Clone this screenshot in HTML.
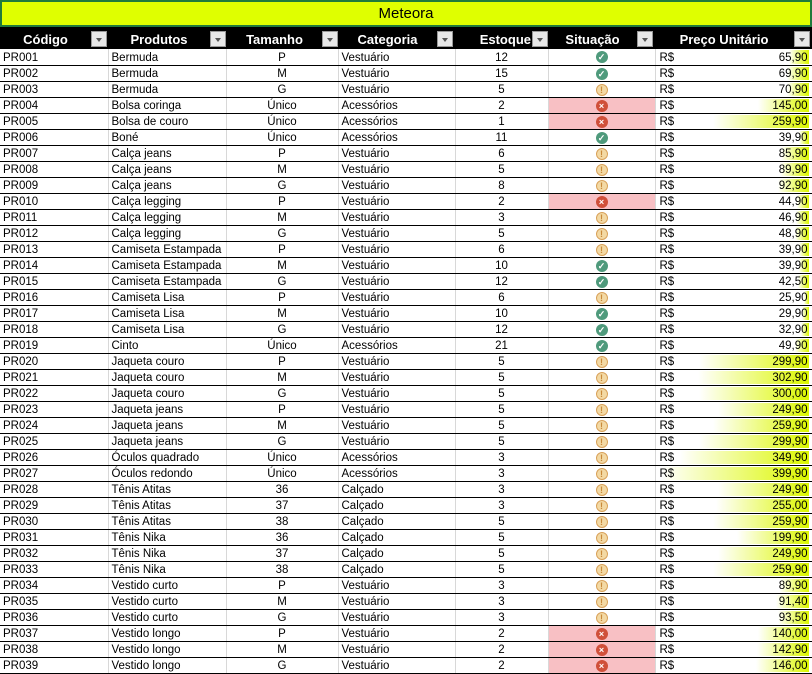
<!DOCTYPE html><html><head><meta charset="utf-8"><style>
*{margin:0;padding:0;box-sizing:border-box}
body{width:812px;height:672px;overflow:hidden;background:#fff;font-family:"Liberation Sans",Arial,sans-serif;font-size:11.5px;color:#000}
.title{position:absolute;left:0;top:0;width:812px;height:27px;background:#dfff00;border:2px solid #1f7a3c;text-align:center;font-size:15px;line-height:24px}
.hdr{position:absolute;left:0;top:27px;width:812px;height:22px;background:#000}
.hdr div{position:absolute;top:0;height:22px;color:#fff;font-weight:bold;font-size:13px;line-height:26px;text-align:center}
.dd{position:absolute;top:4px;width:16px;height:16px;background:#e8e8e8;border:1px solid #999}
.dd:after{content:"";position:absolute;left:4px;top:6px;border-left:3.5px solid transparent;border-right:3.5px solid transparent;border-top:4px solid #555}
table{position:absolute;left:0;top:49px;border-collapse:collapse;table-layout:fixed;width:812px}
td{height:16px;border-bottom:1px solid #000;border-right:1px solid #d8d8d8;padding:0 3px;line-height:14px;vertical-align:bottom;white-space:nowrap;overflow:hidden;position:relative}
td.c{text-align:center}
td.r{background:#f8c0c4}
td.p{padding:0 4px 0 4px}
.bar{position:absolute;right:3px;top:1px;bottom:1px;background:linear-gradient(to right,#fff,#dcf700)}
.v{position:relative;float:right}
.rs{position:relative}
.i{position:absolute;left:50%;top:2px;margin-left:-6px;width:12px;height:12px;border-radius:50%;color:#fff;font-size:9px;line-height:12px;text-align:center;font-weight:bold}
.g{background:#4f9a7c}
.a{background:#f3d9a4;border:1px solid #d9a25a;color:#c98a3a;line-height:10px}
.x{background:#d0503a}
</style></head><body>
<div class="title">Meteora</div>
<div class="hdr">
<div style="left:0;width:91px">Código</div><span class="dd" style="left:91px"></span>
<div style="left:108px;width:102px">Produtos</div><span class="dd" style="left:210px"></span>
<div style="left:226px;width:97px">Tamanho</div><span class="dd" style="left:322px"></span>
<div style="left:338px;width:99px">Categoria</div><span class="dd" style="left:437px"></span>
<div style="left:455px;width:76px;text-align:right">Estoque</div><span class="dd" style="left:532px"></span>
<div style="left:548px;width:89px">Situação</div><span class="dd" style="left:637px"></span>
<div style="left:655px;width:138px">Preço Unitário</div><span class="dd" style="left:794px"></span>
</div>
<table>
<colgroup><col style="width:108px"><col style="width:118px"><col style="width:112px"><col style="width:117px"><col style="width:93px"><col style="width:107px"><col style="width:157px"></colgroup>
<tr><td>PR001</td><td>Bermuda</td><td class="c">P</td><td>Vestuário</td><td class="c">12</td><td class="c"><span class="i g">✓</span></td><td class="p"><div class="bar" style="width:20px"></div><span class="rs">R$</span><span class="v">65,90</span></td></tr>
<tr><td>PR002</td><td>Bermuda</td><td class="c">M</td><td>Vestuário</td><td class="c">15</td><td class="c"><span class="i g">✓</span></td><td class="p"><div class="bar" style="width:22px"></div><span class="rs">R$</span><span class="v">69,90</span></td></tr>
<tr><td>PR003</td><td>Bermuda</td><td class="c">G</td><td>Vestuário</td><td class="c">5</td><td class="c"><span class="i a">!</span></td><td class="p"><div class="bar" style="width:22px"></div><span class="rs">R$</span><span class="v">70,90</span></td></tr>
<tr><td>PR004</td><td>Bolsa coringa</td><td class="c">Único</td><td>Acessórios</td><td class="c">2</td><td class="c r"><span class="i x">×</span></td><td class="p"><div class="bar" style="width:51px"></div><span class="rs">R$</span><span class="v">145,00</span></td></tr>
<tr><td>PR005</td><td>Bolsa de couro</td><td class="c">Único</td><td>Acessórios</td><td class="c">1</td><td class="c r"><span class="i x">×</span></td><td class="p"><div class="bar" style="width:96px"></div><span class="rs">R$</span><span class="v">259,90</span></td></tr>
<tr><td>PR006</td><td>Boné</td><td class="c">Único</td><td>Acessórios</td><td class="c">11</td><td class="c"><span class="i g">✓</span></td><td class="p"><div class="bar" style="width:10px"></div><span class="rs">R$</span><span class="v">39,90</span></td></tr>
<tr><td>PR007</td><td>Calça jeans</td><td class="c">P</td><td>Vestuário</td><td class="c">6</td><td class="c"><span class="i a">!</span></td><td class="p"><div class="bar" style="width:28px"></div><span class="rs">R$</span><span class="v">85,90</span></td></tr>
<tr><td>PR008</td><td>Calça jeans</td><td class="c">M</td><td>Vestuário</td><td class="c">5</td><td class="c"><span class="i a">!</span></td><td class="p"><div class="bar" style="width:29px"></div><span class="rs">R$</span><span class="v">89,90</span></td></tr>
<tr><td>PR009</td><td>Calça jeans</td><td class="c">G</td><td>Vestuário</td><td class="c">8</td><td class="c"><span class="i a">!</span></td><td class="p"><div class="bar" style="width:31px"></div><span class="rs">R$</span><span class="v">92,90</span></td></tr>
<tr><td>PR010</td><td>Calça legging</td><td class="c">P</td><td>Vestuário</td><td class="c">2</td><td class="c r"><span class="i x">×</span></td><td class="p"><div class="bar" style="width:12px"></div><span class="rs">R$</span><span class="v">44,90</span></td></tr>
<tr><td>PR011</td><td>Calça legging</td><td class="c">M</td><td>Vestuário</td><td class="c">3</td><td class="c"><span class="i a">!</span></td><td class="p"><div class="bar" style="width:13px"></div><span class="rs">R$</span><span class="v">46,90</span></td></tr>
<tr><td>PR012</td><td>Calça legging</td><td class="c">G</td><td>Vestuário</td><td class="c">5</td><td class="c"><span class="i a">!</span></td><td class="p"><div class="bar" style="width:14px"></div><span class="rs">R$</span><span class="v">48,90</span></td></tr>
<tr><td>PR013</td><td>Camiseta Estampada</td><td class="c">P</td><td>Vestuário</td><td class="c">6</td><td class="c"><span class="i a">!</span></td><td class="p"><div class="bar" style="width:10px"></div><span class="rs">R$</span><span class="v">39,90</span></td></tr>
<tr><td>PR014</td><td>Camiseta Estampada</td><td class="c">M</td><td>Vestuário</td><td class="c">10</td><td class="c"><span class="i g">✓</span></td><td class="p"><div class="bar" style="width:10px"></div><span class="rs">R$</span><span class="v">39,90</span></td></tr>
<tr><td>PR015</td><td>Camiseta Estampada</td><td class="c">G</td><td>Vestuário</td><td class="c">12</td><td class="c"><span class="i g">✓</span></td><td class="p"><div class="bar" style="width:11px"></div><span class="rs">R$</span><span class="v">42,50</span></td></tr>
<tr><td>PR016</td><td>Camiseta Lisa</td><td class="c">P</td><td>Vestuário</td><td class="c">6</td><td class="c"><span class="i a">!</span></td><td class="p"><div class="bar" style="width:5px"></div><span class="rs">R$</span><span class="v">25,90</span></td></tr>
<tr><td>PR017</td><td>Camiseta Lisa</td><td class="c">M</td><td>Vestuário</td><td class="c">10</td><td class="c"><span class="i g">✓</span></td><td class="p"><div class="bar" style="width:7px"></div><span class="rs">R$</span><span class="v">29,90</span></td></tr>
<tr><td>PR018</td><td>Camiseta Lisa</td><td class="c">G</td><td>Vestuário</td><td class="c">12</td><td class="c"><span class="i g">✓</span></td><td class="p"><div class="bar" style="width:8px"></div><span class="rs">R$</span><span class="v">32,90</span></td></tr>
<tr><td>PR019</td><td>Cinto</td><td class="c">Único</td><td>Acessórios</td><td class="c">21</td><td class="c"><span class="i g">✓</span></td><td class="p"><div class="bar" style="width:14px"></div><span class="rs">R$</span><span class="v">49,90</span></td></tr>
<tr><td>PR020</td><td>Jaqueta couro</td><td class="c">P</td><td>Vestuário</td><td class="c">5</td><td class="c"><span class="i a">!</span></td><td class="p"><div class="bar" style="width:110px"></div><span class="rs">R$</span><span class="v">299,90</span></td></tr>
<tr><td>PR021</td><td>Jaqueta couro</td><td class="c">M</td><td>Vestuário</td><td class="c">5</td><td class="c"><span class="i a">!</span></td><td class="p"><div class="bar" style="width:111px"></div><span class="rs">R$</span><span class="v">302,90</span></td></tr>
<tr><td>PR022</td><td>Jaqueta couro</td><td class="c">G</td><td>Vestuário</td><td class="c">5</td><td class="c"><span class="i a">!</span></td><td class="p"><div class="bar" style="width:110px"></div><span class="rs">R$</span><span class="v">300,00</span></td></tr>
<tr><td>PR023</td><td>Jaqueta jeans</td><td class="c">P</td><td>Vestuário</td><td class="c">5</td><td class="c"><span class="i a">!</span></td><td class="p"><div class="bar" style="width:91px"></div><span class="rs">R$</span><span class="v">249,90</span></td></tr>
<tr><td>PR024</td><td>Jaqueta jeans</td><td class="c">M</td><td>Vestuário</td><td class="c">5</td><td class="c"><span class="i a">!</span></td><td class="p"><div class="bar" style="width:96px"></div><span class="rs">R$</span><span class="v">259,90</span></td></tr>
<tr><td>PR025</td><td>Jaqueta jeans</td><td class="c">G</td><td>Vestuário</td><td class="c">5</td><td class="c"><span class="i a">!</span></td><td class="p"><div class="bar" style="width:110px"></div><span class="rs">R$</span><span class="v">299,90</span></td></tr>
<tr><td>PR026</td><td>Óculos quadrado</td><td class="c">Único</td><td>Acessórios</td><td class="c">3</td><td class="c"><span class="i a">!</span></td><td class="p"><div class="bar" style="width:129px"></div><span class="rs">R$</span><span class="v">349,90</span></td></tr>
<tr><td>PR027</td><td>Óculos redondo</td><td class="c">Único</td><td>Acessórios</td><td class="c">3</td><td class="c"><span class="i a">!</span></td><td class="p"><div class="bar" style="width:148px"></div><span class="rs">R$</span><span class="v">399,90</span></td></tr>
<tr><td>PR028</td><td>Tênis Atitas</td><td class="c">36</td><td>Calçado</td><td class="c">3</td><td class="c"><span class="i a">!</span></td><td class="p"><div class="bar" style="width:91px"></div><span class="rs">R$</span><span class="v">249,90</span></td></tr>
<tr><td>PR029</td><td>Tênis Atitas</td><td class="c">37</td><td>Calçado</td><td class="c">3</td><td class="c"><span class="i a">!</span></td><td class="p"><div class="bar" style="width:93px"></div><span class="rs">R$</span><span class="v">255,00</span></td></tr>
<tr><td>PR030</td><td>Tênis Atitas</td><td class="c">38</td><td>Calçado</td><td class="c">5</td><td class="c"><span class="i a">!</span></td><td class="p"><div class="bar" style="width:96px"></div><span class="rs">R$</span><span class="v">259,90</span></td></tr>
<tr><td>PR031</td><td>Tênis Nika</td><td class="c">36</td><td>Calçado</td><td class="c">5</td><td class="c"><span class="i a">!</span></td><td class="p"><div class="bar" style="width:72px"></div><span class="rs">R$</span><span class="v">199,90</span></td></tr>
<tr><td>PR032</td><td>Tênis Nika</td><td class="c">37</td><td>Calçado</td><td class="c">5</td><td class="c"><span class="i a">!</span></td><td class="p"><div class="bar" style="width:91px"></div><span class="rs">R$</span><span class="v">249,90</span></td></tr>
<tr><td>PR033</td><td>Tênis Nika</td><td class="c">38</td><td>Calçado</td><td class="c">5</td><td class="c"><span class="i a">!</span></td><td class="p"><div class="bar" style="width:96px"></div><span class="rs">R$</span><span class="v">259,90</span></td></tr>
<tr><td>PR034</td><td>Vestido curto</td><td class="c">P</td><td>Vestuário</td><td class="c">3</td><td class="c"><span class="i a">!</span></td><td class="p"><div class="bar" style="width:29px"></div><span class="rs">R$</span><span class="v">89,90</span></td></tr>
<tr><td>PR035</td><td>Vestido curto</td><td class="c">M</td><td>Vestuário</td><td class="c">3</td><td class="c"><span class="i a">!</span></td><td class="p"><div class="bar" style="width:33px"></div><span class="rs">R$</span><span class="v">91,40</span></td></tr>
<tr><td>PR036</td><td>Vestido curto</td><td class="c">G</td><td>Vestuário</td><td class="c">3</td><td class="c"><span class="i a">!</span></td><td class="p"><div class="bar" style="width:31px"></div><span class="rs">R$</span><span class="v">93,50</span></td></tr>
<tr><td>PR037</td><td>Vestido longo</td><td class="c">P</td><td>Vestuário</td><td class="c">2</td><td class="c r"><span class="i x">×</span></td><td class="p"><div class="bar" style="width:51px"></div><span class="rs">R$</span><span class="v">140,00</span></td></tr>
<tr><td>PR038</td><td>Vestido longo</td><td class="c">M</td><td>Vestuário</td><td class="c">2</td><td class="c r"><span class="i x">×</span></td><td class="p"><div class="bar" style="width:52px"></div><span class="rs">R$</span><span class="v">142,90</span></td></tr>
<tr><td>PR039</td><td>Vestido longo</td><td class="c">G</td><td>Vestuário</td><td class="c">2</td><td class="c r"><span class="i x">×</span></td><td class="p"><div class="bar" style="width:53px"></div><span class="rs">R$</span><span class="v">146,00</span></td></tr>
</table>
</body></html>
